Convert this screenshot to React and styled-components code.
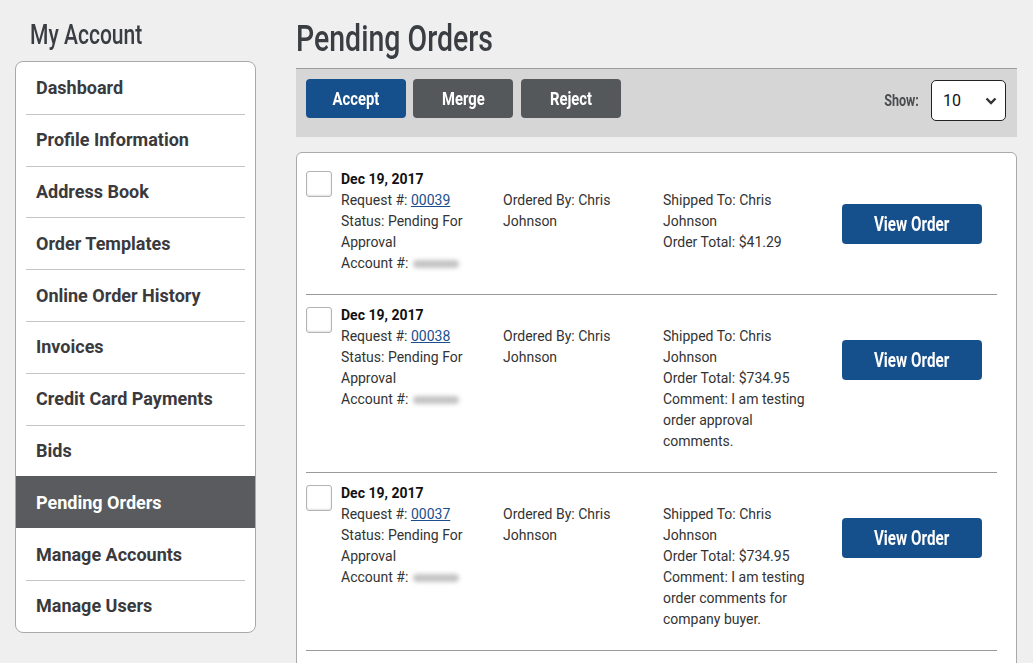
import React from "react";
import styled, { createGlobalStyle } from "styled-components";

const GlobalStyle = createGlobalStyle`
  body {
    margin: 0;
    background: #efefef;
    font-family: Roboto, "Liberation Sans", sans-serif;
    color: #333;
  }
`;

// no condensed face is installed, so the condensed headings are Roboto squeezed
const Squeeze = styled.span`
  display: inline-block;
  transform: scaleX(${(p) => p.x || 0.78});
  transform-origin: ${(p) => p.origin || "center"};
  white-space: nowrap;
`;

const Page = styled.div`
  display: flex;
  align-items: flex-start;
  gap: 40px;
  padding: 0 16px 0 15px;
  height: 663px;
  overflow: hidden;
`;

const Sidebar = styled.aside`
  width: 241px;
  flex-shrink: 0;
`;

const SideTitle = styled.h2`
  margin: 0;
  padding: 20px 0 0 15px;
  height: 61px;
  box-sizing: border-box;
  font-weight: 500;
  font-size: 27px;
  line-height: 30px;
  color: #3a3d42;
`;

const Menu = styled.nav`
  background: #fff;
  border: 1px solid #a9a9a9;
  border-radius: 8px;
  overflow: hidden;
`;

const MenuItem = styled.a`
  display: flex;
  align-items: center;
  height: 51.8px;
  margin: 0 ${(p) => (p.active ? "0" : "10px")};
  padding: 0 0 1px ${(p) => (p.active ? "20px" : "10px")};
  box-sizing: border-box;
  font-weight: 700;
  font-size: 18px;
  color: ${(p) => (p.active ? "#fff" : "#3a3a3d")};
  background: ${(p) => (p.active ? "#595b5e" : "transparent")};
  border-top: 1px solid ${(p) => (p.first || p.active || p.afterActive ? "transparent" : "#c4c4c4")};
  text-decoration: none;
`;

const Main = styled.main`
  flex: 1;
  min-width: 0;
`;

const Title = styled.h1`
  margin: 0;
  padding-top: 18px;
  height: 68px;
  box-sizing: border-box;
  font-weight: 500;
  font-size: 37px;
  line-height: 42px;
  color: #3a3d42;
`;

const Toolbar = styled.div`
  display: flex;
  align-items: flex-start;
  height: 69px;
  padding: 10px 10px 0;
  background: #d6d6d6;
  border-top: 1px solid #9d9d9d;
  box-sizing: border-box;
`;

const Button = styled.button`
  width: ${(p) => p.w || "100px"};
  height: ${(p) => p.h || "39px"};
  margin-right: ${(p) => p.gap || "0"};
  padding: 0;
  border: 0;
  border-radius: 4px;
  background: ${(p) => (p.variant === "grey" ? "#55585b" : "#154f8c")};
  color: #fff;
  font-family: Roboto, "Liberation Sans", sans-serif;
  font-weight: 700;
  font-size: ${(p) => p.fs || "19px"};
  cursor: pointer;
  flex-shrink: 0;
`;

const ShowLabel = styled.span`
  margin: 11px 12px 0 auto;
  font-size: 17px;
  font-weight: 700;
  line-height: 20px;
  color: #4a4c50;
`;

const Select = styled.div`
  display: flex;
  align-items: center;
  justify-content: space-between;
  width: 75px;
  height: 41px;
  margin: 1px 1px 0 0;
  padding: 0 8px 0 11px;
  box-sizing: border-box;
  background: #fff;
  border: 1px solid #222;
  border-radius: 5px;
  font-size: 16px;
  color: #111;
`;

const List = styled.div`
  margin-top: 15px;
  background: #fff;
  border: 1px solid #aaa;
  border-radius: 6px;
  padding-top: 6px;
`;

const Row = styled.div`
  display: flex;
  margin: 0 19px 0 9px;
  padding: 10px 0 20px;
  border-bottom: 1px solid #9a9a9a;
`;

const Check = styled.span`
  width: 26px;
  height: 26px;
  margin-top: 2px;
  box-sizing: border-box;
  border: 1px solid #b3b3b3;
  border-radius: 3px;
  background: #fff;
  box-shadow: inset 0 -1px 2px rgba(0, 0, 0, 0.12);
  flex-shrink: 0;
`;

const Body = styled.div`
  margin-left: 9px;
  font-size: 14px;
  line-height: 21px;
`;

const OrderDate = styled.div`
  font-weight: 700;
  color: #111;
`;

const Grid = styled.div`
  display: grid;
  grid-template-columns: 162px 160px 160px 140px;
`;

const Col = styled.div`
  padding-right: ${(p) => p.pr || "4px"};
`;

const Link = styled.a`
  color: #1a4f8c;
  text-decoration: underline;
`;

const Blur = styled.span`
  display: inline-block;
  width: 46px;
  height: 8px;
  margin-left: 5px;
  vertical-align: middle;
  background: #c4c4c4;
  border-radius: 4px;
  filter: blur(2px);
`;

const ButtonCell = styled.div`
  padding-top: 14px;
  margin-left: 19px;
`;

const Chevron = () => (
  <svg width="12" height="8" viewBox="0 0 12 8">
    <path d="M1.5 1.5 L6 6 L10.5 1.5" stroke="#333" strokeWidth="2.4" fill="none" />
  </svg>
);

const menu = [
  "Dashboard",
  "Profile Information",
  "Address Book",
  "Order Templates",
  "Online Order History",
  "Invoices",
  "Credit Card Payments",
  "Bids",
  "Pending Orders",
  "Manage Accounts",
  "Manage Users",
];

const orders = [
  { id: "00039", total: "$41.29" },
  { id: "00038", total: "$734.95", comment: "I am testing order approval comments." },
  { id: "00037", total: "$734.95", comment: "I am testing order comments for company buyer." },
  { id: "00036", total: "$41.29" },
];

const App = () => {
  const activeIndex = menu.indexOf("Pending Orders");
  return (
    <>
      <GlobalStyle />
      <Page>
        <Sidebar>
          <SideTitle>
            <Squeeze origin="left">My Account</Squeeze>
          </SideTitle>
          <Menu>
            {menu.map((m, i) => (
              <MenuItem
                key={m}
                href="#"
                first={i === 0}
                active={i === activeIndex}
                afterActive={i === activeIndex + 1}
              >
                {m}
              </MenuItem>
            ))}
          </Menu>
        </Sidebar>
        <Main>
          <Title>
            <Squeeze origin="left" x={0.77}>Pending Orders</Squeeze>
          </Title>
          <Toolbar>
            <Button gap="7px"><Squeeze>Accept</Squeeze></Button>
            <Button variant="grey" gap="8px"><Squeeze>Merge</Squeeze></Button>
            <Button variant="grey"><Squeeze>Reject</Squeeze></Button>
            <ShowLabel>
              <Squeeze origin="right" x={0.74}>Show:</Squeeze>
            </ShowLabel>
            <Select>
              <span>10</span>
              <Chevron />
            </Select>
          </Toolbar>
          <List>
            {orders.map((o) => (
              <Row key={o.id}>
                <Check />
                <Body>
                  <OrderDate>Dec 19, 2017</OrderDate>
                  <Grid>
                    <Col>
                      Request #: <Link href="#">{o.id}</Link>
                      <br />
                      Status: Pending For Approval
                      <br />
                      Account #:<Blur />
                    </Col>
                    <Col>Ordered By: Chris Johnson</Col>
                    <Col pr="10px">
                      Shipped To: Chris Johnson
                      <br />
                      Order Total: {o.total}
                      {o.comment && (
                        <>
                          <br />
                          Comment: {o.comment}
                        </>
                      )}
                    </Col>
                    <ButtonCell>
                      <Button w="140px" h="40px" fs="20px">
                        <Squeeze x={0.76}>View Order</Squeeze>
                      </Button>
                    </ButtonCell>
                  </Grid>
                </Body>
              </Row>
            ))}
          </List>
        </Main>
      </Page>
    </>
  );
};

export default App;
